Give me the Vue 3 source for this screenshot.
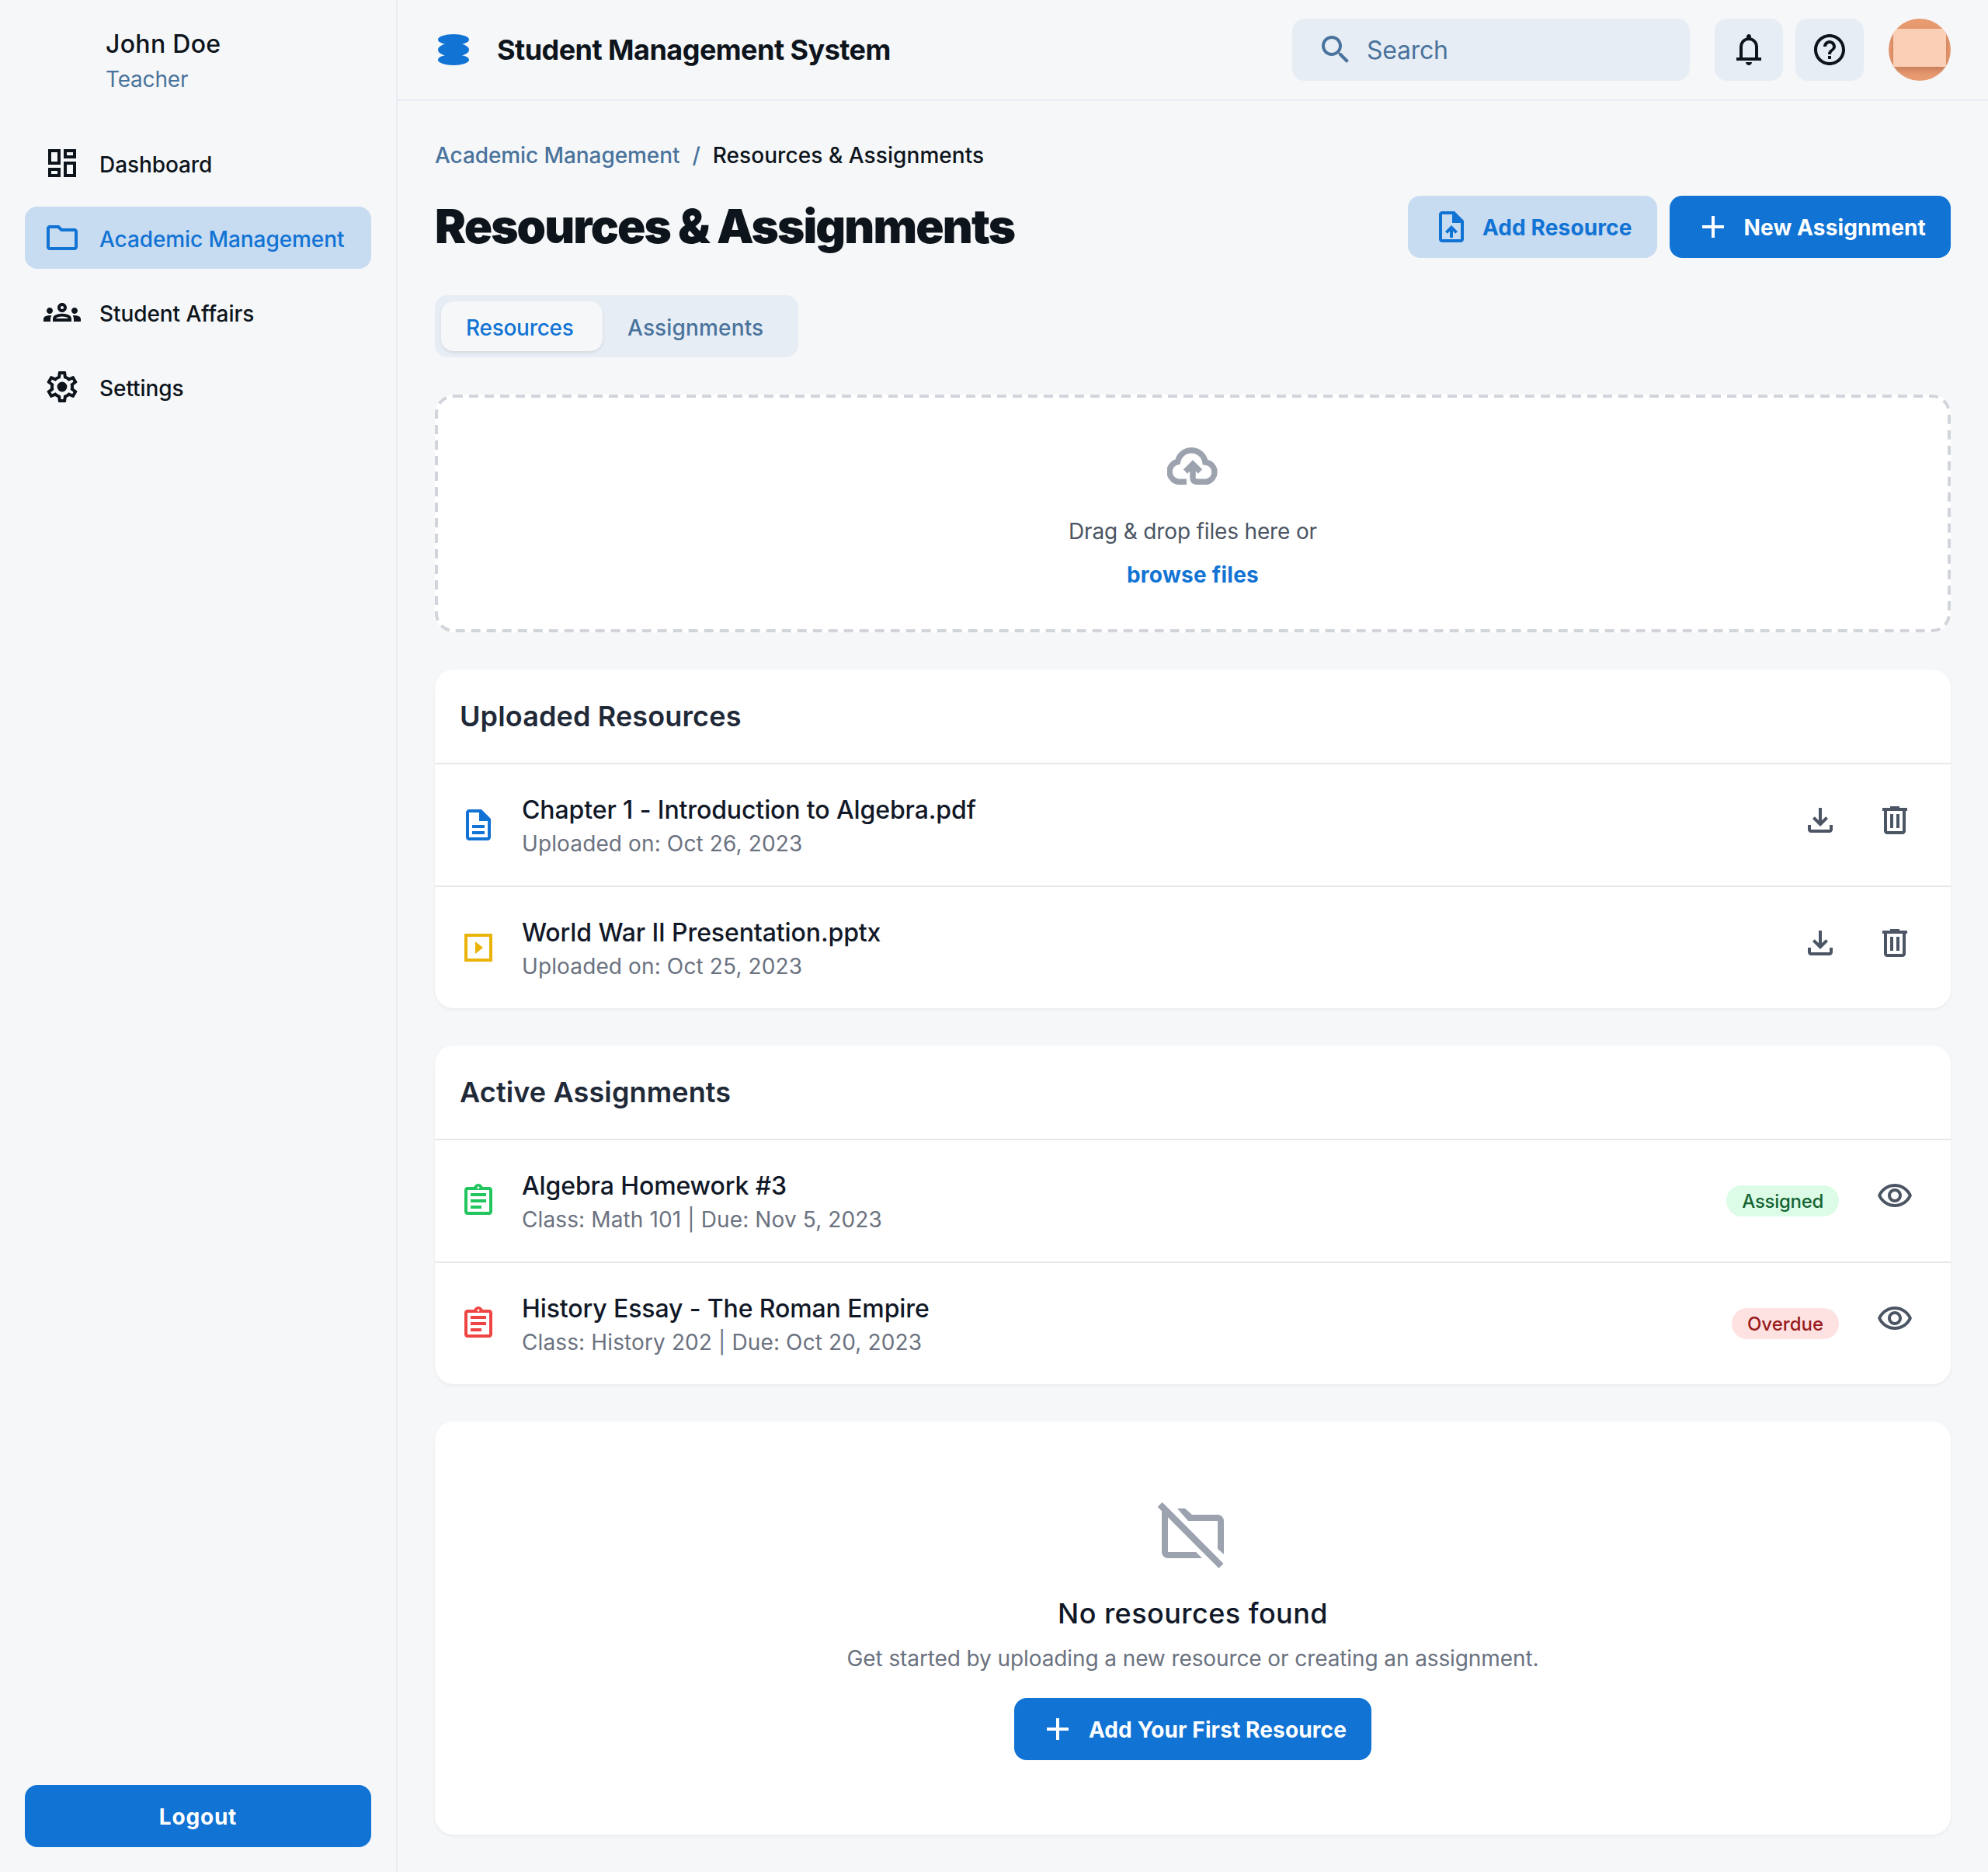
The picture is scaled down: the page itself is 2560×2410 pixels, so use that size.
<script setup>
const nav = [
  { label: 'Dashboard', active: false, vb: '0 0 24 24', d: 'M19 5v2h-4V5h4M9 5v6H5V5h4m10 8v6h-4v-6h4M9 17v2H5v-2h4M21 3h-8v6h8V3zM11 3H3v10h8V3zm10 8h-8v10h8V11zm-10 4H3v6h8v-6z' },
  { label: 'Academic Management', active: true, vb: '0 0 24 24', d: 'M9.17 6l2 2H20v10H4V6h5.17M10 4H4c-1.1 0-1.99.9-1.99 2L2 18c0 1.1.9 2 2 2h16c1.1 0 2-.9 2-2V8c0-1.1-.9-2-2-2h-8l-2-2z' },
  { label: 'Student Affairs', active: false, vb: '0 0 24 24', d: 'M4 13c1.1 0 2-.9 2-2s-.9-2-2-2-2 .9-2 2 .9 2 2 2zm1.13 1.1c-.37-.06-.74-.1-1.13-.1-.99 0-1.93.21-2.78.58C.48 14.9 0 15.62 0 16.43V18h4.5v-1.61c0-.83.23-1.61.63-2.29zM20 13c1.1 0 2-.9 2-2s-.9-2-2-2-2 .9-2 2 .9 2 2 2zm4 3.43c0-.81-.48-1.53-1.22-1.85-.85-.37-1.79-.58-2.78-.58-.39 0-.76.04-1.13.1.4.68.63 1.46.63 2.29V18H24v-1.57zm-7.76-2.65c-1.17-.52-2.61-.9-4.24-.9-1.63 0-3.07.39-4.24.9C6.68 14.13 6 15.21 6 16.39V18h12v-1.61c0-1.18-.68-2.26-1.76-2.61zM8.07 16c.09-.23.13-.39.91-.69.97-.38 1.99-.56 3.02-.56s2.05.18 3.02.56c.77.3.81.46.91.69H8.07zM12 8c.55 0 1 .45 1 1s-.45 1-1 1-1-.45-1-1 .45-1 1-1m0-2c-1.66 0-3 1.34-3 3s1.34 3 3 3 3-1.34 3-3-1.34-3-3-3z' },
  { label: 'Settings', active: false, vb: '0 0 24 24', d: 'M19.43 12.98c.04-.32.07-.64.07-.98 0-.34-.03-.66-.07-.98l2.11-1.65c.19-.15.24-.42.12-.64l-2-3.46c-.09-.16-.26-.25-.44-.25-.06 0-.12.01-.17.03l-2.49 1c-.52-.4-1.08-.73-1.69-.98l-.38-2.65C14.46 2.18 14.25 2 14 2h-4c-.25 0-.46.18-.49.42l-.38 2.65c-.61.25-1.17.59-1.69.98l-2.49-1c-.06-.02-.12-.03-.18-.03-.17 0-.34.09-.43.25l-2 3.46c-.13.22-.07.49.12.64l2.11 1.65c-.04.32-.07.65-.07.98 0 .33.03.66.07.98l-2.11 1.65c-.19.15-.24.42-.12.64l2 3.46c.09.16.26.25.44.25.06 0 .12-.01.17-.03l2.49-1c.52.4 1.08.73 1.69.98l.38 2.65c.03.24.24.42.49.42h4c.25 0 .46-.18.49-.42l.38-2.65c.61-.25 1.17-.59 1.69-.98l2.49 1c.06.02.12.03.18.03.17 0 .34-.09.43-.25l2-3.46c.12-.22.07-.49-.12-.64l-2.11-1.65zm-1.98-1.71c.04.31.05.52.05.73 0 .21-.02.43-.05.73l-.14 1.13.89.7 1.08.84-.7 1.21-1.27-.51-1.04-.42-.9.68c-.43.32-.84.56-1.25.73l-1.06.43-.16 1.13-.2 1.35h-1.4l-.19-1.35-.16-1.13-1.06-.43c-.43-.18-.83-.41-1.23-.71l-.91-.7-1.06.43-1.27.51-.7-1.21 1.08-.84.89-.7-.14-1.13c-.03-.31-.05-.54-.05-.74s.02-.43.05-.73l.14-1.13-.89-.7-1.08-.84.7-1.21 1.27.51 1.04.42.9-.68c.43-.32.84-.56 1.25-.73l1.06-.43.16-1.13.2-1.35h1.39l.19 1.35.16 1.13 1.06.43c.43.18.83.41 1.23.71l.91.7 1.06-.43 1.27-.51.7 1.21-1.07.85-.89.7.14 1.13zM12 8.8a3.2 3.2 0 1 0 0 6.4 3.2 3.2 0 0 0 0-6.4z' }
]

const plus = 'M19 13h-6v6h-2v-6H5v-2h6V5h2v6h6v2z'
const download = 'M18 15v3H6v-3H4v3c0 1.1.9 2 2 2h12c1.1 0 2-.9 2-2v-3h-2zm-1-4l-1.41-1.41L13 12.17V4h-2v8.17L8.41 9.59 7 11l5 5 5-5z'
const trash = 'M15 4V3H9v1H4v2h1v13c0 1.1.9 2 2 2h10c1.1 0 2-.9 2-2V6h1V4h-5zm2 15H7V6h10v13zM9 8h2v9H9zm4 0h2v9h-2z'
const eye = 'M12 6c3.79 0 7.17 2.13 8.82 5.5C19.17 14.87 15.79 17 12 17s-7.17-2.13-8.82-5.5C4.83 8.13 8.21 6 12 6m0-2C7 4 2.73 7.11 1 11.5 2.73 15.89 7 19 12 19s9.27-3.11 11-7.5C21.27 7.11 17 4 12 4zm0 5c1.38 0 2.5 1.12 2.5 2.5S13.38 14 12 14s-2.5-1.12-2.5-2.5S10.62 9 12 9m0-2c-2.48 0-4.5 2.02-4.5 4.5S9.52 16 12 16s4.5-2.02 4.5-4.5S14.48 7 12 7z'
const assignment = 'M19 3h-4.18C14.4 1.84 13.3 1 12 1c-1.3 0-2.4.84-2.82 2H5c-1.1 0-2 .9-2 2v14c0 1.1.9 2 2 2h14c1.1 0 2-.9 2-2V5c0-1.1-.9-2-2-2zm-7-.25c.41 0 .75.34.75.75s-.34.75-.75.75-.75-.34-.75-.75.34-.75.75-.75zM19 19H5V5h14v14zM7 15h7v2H7zM7 11h10v2H7zM7 7h10v2H7z'

const resources = [
  { name: 'Chapter 1 - Introduction to Algebra.pdf', meta: 'Uploaded on: Oct 26, 2023', color: '#1173d4', d: 'M14 2H6c-1.1 0-2 .9-2 2v16c0 1.1.9 2 2 2h12c1.1 0 2-.9 2-2V8l-6-6zM18 20H6V4h6.5v5.5H18V20zM8 12h8v2H8zM8 16h8v2H8z' },
  { name: 'World War II Presentation.pptx', meta: 'Uploaded on: Oct 25, 2023', color: '#eab308', d: 'M3.5 3h17c.3 0 .5.2.5.5v17c0 .3-.2.5-.5.5h-17c-.3 0-.5-.2-.5-.5v-17c0-.3.2-.5.5-.5zM5 5v14h14V5H5zM10 8l5 4-5 4V8z' }
]
const assignments = [
  { name: 'Algebra Homework #3', meta: 'Class: Math 101 | Due: Nov 5, 2023', color: '#22c55e', status: 'Assigned', kind: 'ok' },
  { name: 'History Essay - The Roman Empire', meta: 'Class: History 202 | Due: Oct 20, 2023', color: '#ef4444', status: 'Overdue', kind: 'late' }
]
</script>

<template>
  <div class="page">
    <aside class="sidebar">
      <div class="user">
        <div class="user-slot"></div>
        <div>
          <div class="user-name">John Doe</div>
          <div class="user-role">Teacher</div>
        </div>
      </div>
      <nav class="nav">
        <a v-for="item in nav" :key="item.label" class="nav-item" :class="{ active: item.active }">
          <svg class="icon" :viewBox="item.vb" fill="currentColor"><path :d="item.d" /></svg>
          <span>{{ item.label }}</span>
        </a>
      </nav>
      <button class="btn btn-primary logout"><span>Logout</span></button>
    </aside>

    <div class="content">
      <header class="topbar">
        <div class="brand">
          <svg class="icon" viewBox="0 0 48 48" fill="#1173d4">
            <ellipse cx="24" cy="11" rx="20" ry="7" />
            <ellipse cx="24" cy="24" rx="20" ry="9" />
            <ellipse cx="24" cy="37" rx="20" ry="7" />
          </svg>
          <span class="brand-name">Student Management System</span>
        </div>
        <div class="top-actions">
          <div class="search">
            <svg class="icon" viewBox="0 0 24 24" fill="#49739c"><path d="M15.5 14h-.79l-.28-.27C15.41 12.59 16 11.11 16 9.5 16 5.91 13.09 3 9.5 3S3 5.91 3 9.5 5.91 16 9.5 16c1.61 0 3.09-.59 4.23-1.57l.27.28v.79l5 4.99L20.49 19l-4.99-5zm-6 0C7.01 14 5 11.99 5 9.5S7.01 5 9.5 5 14 7.01 14 9.5 11.99 14 9.5 14z" /></svg>
            <span>Search</span>
          </div>
          <button class="icon-btn">
            <svg class="icon" viewBox="0 -960 960 960" fill="#0d141c"><path d="M160-200v-80h80v-280q0-83 50-147.5T420-792v-28q0-25 17.5-42.5T480-880q25 0 42.5 17.5T540-820v28q80 20 130 84.5T720-560v280h80v80H160Zm320-300Zm0 420q-33 0-56.5-23.5T400-160h160q0 33-23.5 56.5T480-80ZM320-280h320v-280q0-66-47-113t-113-47q-66 0-113 47t-47 113v280Z" /></svg>
          </button>
          <button class="icon-btn help">
            <svg class="icon" viewBox="0 0 24 24" fill="#0d141c"><path d="M11 18h2v-2h-2v2zm1-16C6.48 2 2 6.48 2 12s4.48 10 10 10 10-4.48 10-10S17.52 2 12 2zm0 18c-4.41 0-8-3.59-8-8s3.59-8 8-8 8 3.59 8 8-3.59 8-8 8zm0-14c-2.21 0-4 1.79-4 4h2c0-1.1.9-2 2-2s2 .9 2 2c0 2-3 1.75-3 5h2c0-2.25 3-2.5 3-5 0-2.21-1.79-4-4-4z" /></svg>
          </button>
          <div class="avatar"></div>
        </div>
      </header>

      <main class="main">
        <div class="crumbs">
          <span class="crumb-link">Academic Management</span>
          <span class="crumb-link">/</span>
          <span class="crumb-current">Resources &amp; Assignments</span>
        </div>

        <div class="title-row">
          <h1>Resources &amp; Assignments</h1>
          <div class="title-actions">
            <button class="btn btn-soft">
              <svg class="icon" viewBox="0 0 24 24" fill="currentColor" fill-rule="evenodd"><path d="M14 2H6c-1.1 0-2 .9-2 2v16c0 1.1.9 2 2 2h12c1.1 0 2-.9 2-2V8l-6-6zM18 20H6V4h6.5v5.5H18V20z" /><path d="M8 15.01l1.41 1.41L11 14.84V19h2v-4.16l1.59 1.59L16 15.01 12.01 11z" /></svg>
              <span>Add Resource</span>
            </button>
            <button class="btn btn-primary">
              <svg class="icon" viewBox="0 0 24 24" fill="currentColor"><path :d="plus" /></svg>
              <span>New Assignment</span>
            </button>
          </div>
        </div>

        <div class="tabs">
          <div class="tab tab-active">Resources</div>
          <div class="tab">Assignments</div>
        </div>

        <section class="drop">
          <svg class="drop-border" viewBox="0 0 1952 306" fill="none">
            <rect x="2" y="2" width="1948" height="302" rx="22" stroke="#d1d5db" stroke-width="4" stroke-dasharray="12 8" />
          </svg>
          <svg class="cloud" viewBox="0 0 66 48" fill="none" stroke="#9ca3af" stroke-width="7.5">
            <path d="M25 44.25H16.5A13 13 0 0 1 13.5 18.5A18 18 0 0 1 49 19A12.8 12.8 0 0 1 51 44.25H39Q33 44.25 33 39V20" />
            <path d="M23.5 31L33 21.5L42.5 31" />
          </svg>
          <p class="drop-text">Drag &amp; drop files here or</p>
          <p class="drop-link">browse files</p>
        </section>

        <section class="card">
          <h2 class="card-title">Uploaded Resources</h2>
          <div v-for="r in resources" :key="r.name" class="row">
            <svg class="icon" viewBox="0 0 24 24" :fill="r.color" fill-rule="evenodd"><path :d="r.d" /></svg>
            <div class="row-body">
              <div class="row-name">{{ r.name }}</div>
              <div class="row-meta">{{ r.meta }}</div>
            </div>
            <div class="row-actions">
              <button class="ghost"><svg class="icon" viewBox="0 0 24 24" fill="#4b5563"><path :d="download" /></svg></button>
              <button class="ghost"><svg class="icon" viewBox="0 0 24 24" fill="#4b5563"><path :d="trash" /></svg></button>
            </div>
          </div>
        </section>

        <section class="card">
          <h2 class="card-title">Active Assignments</h2>
          <div v-for="a in assignments" :key="a.name" class="row">
            <svg class="icon" viewBox="0 0 24 24" :fill="a.color"><path :d="assignment" /></svg>
            <div class="row-body">
              <div class="row-name">{{ a.name }}</div>
              <div class="row-meta">{{ a.meta }}</div>
            </div>
            <div class="row-actions row-actions-status">
              <span class="pill" :class="a.kind">{{ a.status }}</span>
              <button class="ghost"><svg class="icon" viewBox="0 0 24 24" fill="#4b5563"><path :d="eye" /></svg></button>
            </div>
          </div>
        </section>

        <section class="card empty">
          <svg class="empty-icon" viewBox="0 0 96 96" fill="#9ca3af">
            <path d="M8 11V64a8 8 0 0 0 8 8H60l-8-8H16V19z" />
            <path d="M28 8H38L47 16H80a8 8 0 0 1 8 8V67l-8-7V24H42z" />
            <path d="M2.7 6L8.7 0L87.5 79L81.5 85z" />
          </svg>
          <h3>No resources found</h3>
          <p>Get started by uploading a new resource or creating an assignment.</p>
          <button class="btn btn-primary">
            <svg class="icon" viewBox="0 0 24 24" fill="currentColor"><path :d="plus" /></svg>
            <span>Add Your First Resource</span>
          </button>
        </section>
      </main>
    </div>
  </div>
</template>

<style>
html, body { margin: 0; background: #f6f7f8; }
</style>

<style scoped>
.page {
  display: flex;
  width: 2560px;
  height: 2410px;
  background: #f6f7f8;
  color: #0d141c;
  font-family: Inter, "Liberation Sans", sans-serif;
  overflow: hidden;
}
.icon { width: 48px; height: 48px; flex: none; display: block; }
button { font-family: inherit; border: 0; cursor: pointer; padding: 0; }
h1, h2, h3, p { margin: 0; }

.sidebar {
  box-sizing: border-box;
  width: 512px;
  flex: none;
  padding: 32px;
  border-right: 2px solid #e7edf4;
  display: flex;
  flex-direction: column;
}
.user { display: flex; gap: 24px; height: 90px; margin-top: 1px; margin-bottom: 47px; }
.user-slot { width: 80px; height: 80px; flex: none; }
.user-name { font-size: 32px; line-height: 48px; font-weight: 500; letter-spacing: 0.3px; }
.user-role { font-size: 28px; line-height: 42px; color: #49739c; letter-spacing: -0.2px; }

.nav { display: flex; flex-direction: column; gap: 16px; flex: 1; }
.nav-item {
  height: 80px;
  box-sizing: border-box;
  padding: 0 24px;
  display: flex;
  align-items: center;
  gap: 24px;
  border-radius: 16px;
  font-size: 28px;
  font-weight: 500;
  line-height: 42px;
  letter-spacing: -0.08px;
}
.nav-item span { padding-top: 3px; }
.nav-item.active { background: #c7dbf1; color: #1173d4; }

.logout { width: 100%; height: 80px; justify-content: center; flex: none; margin-top: auto; }
.logout span { padding-top: 3px; letter-spacing: 0.8px; }

.content { flex: 1; min-width: 0; display: flex; flex-direction: column; }
.topbar {
  height: 128px;
  flex: none;
  padding: 0 48px;
  border-bottom: 2px solid #e7edf4;
  display: flex;
  align-items: center;
  justify-content: space-between;
}
.brand { display: flex; align-items: center; gap: 32px; }
.brand-name { font-size: 36px; font-weight: 700; letter-spacing: -0.54px; }
.top-actions { display: flex; align-items: center; gap: 16px; }
.search {
  box-sizing: border-box;
  width: 512px;
  height: 80px;
  padding-left: 32px;
  margin-right: 16px;
  display: flex;
  align-items: center;
  gap: 16px;
  background: #e7edf4;
  border-radius: 16px;
  color: #49739c;
  font-size: 32px;
  letter-spacing: -0.25px;
}
.icon-btn {
  width: 88px;
  height: 80px;
  background: #e7edf4;
  border-radius: 16px;
  display: flex;
  align-items: center;
  justify-content: center;
}
.help { margin-right: 16px; }
.avatar {
  width: 80px;
  height: 80px;
  border-radius: 50%;
  background: #e89a70;
  position: relative;
  overflow: hidden;
}
.avatar::after {
  content: "";
  position: absolute;
  left: 6px;
  right: 6px;
  top: 13px;
  height: 49px;
  background: #facfb5;
  box-shadow: 0 4px 8px rgba(130, 70, 40, 0.35);
}

.main { flex: 1; padding: 48px; display: flex; flex-direction: column; }
.crumbs { display: flex; gap: 16px; font-size: 28px; font-weight: 500; line-height: 44px; margin-bottom: 30px; }
.crumb-link { color: #49739c; letter-spacing: -0.08px; }
.crumb-current { letter-spacing: 0.07px; }

.title-row { display: flex; align-items: center; justify-content: space-between; height: 80px; margin-bottom: 48px; }
h1 { font-size: 60px; font-weight: 900; letter-spacing: -1.85px; line-height: 76px; margin-bottom: 3px; color: #0d141c; }
.title-actions { display: flex; gap: 16px; }
.btn {
  height: 80px;
  box-sizing: border-box;
  padding: 0 32px;
  display: flex;
  align-items: center;
  gap: 16px;
  border-radius: 16px;
  font-size: 28px;
  font-weight: 700;
  letter-spacing: 0.13px;
}
.btn span { padding-top: 1px; }
.btn-primary { background: #1173d4; color: #fff; }
.btn-soft { background: #c7dbf1; color: #1173d4; }

.tabs {
  align-self: flex-start;
  width: 468px;
  box-sizing: border-box;
  height: 80px;
  padding: 8px;
  display: flex;
  background: #e7edf4;
  border-radius: 16px;
  margin-bottom: 48px;
}
.tab {
  box-sizing: border-box;
  height: 64px;
  padding: 4px 0 0 32px;
  display: flex;
  align-items: center;
  border-radius: 16px;
  font-size: 28px;
  font-weight: 500;
  color: #49739c;
  letter-spacing: 0.15px;
}
.tab-active { width: 208px; background: #f6f7f8; color: #1173d4; letter-spacing: -0.27px; box-shadow: 0 2px 4px rgba(0, 0, 0, 0.08); }

.drop {
  box-sizing: border-box;
  height: 306px;
  padding-top: 68px;
  margin-bottom: 48px;
  border-radius: 24px;
  background: #fff;
  position: relative;
  display: flex;
  flex-direction: column;
  align-items: center;
}
.drop-border { position: absolute; inset: 0; width: 100%; height: 100%; }
.cloud { width: 66px; height: 48px; display: block; }
.drop-text { margin-top: 39px; font-size: 28px; line-height: 42px; color: #4b5563; letter-spacing: -0.16px; }
.drop-link { margin-top: 14px; font-size: 28px; line-height: 42px; font-weight: 700; color: #1173d4; letter-spacing: 0.27px; }

.card {
  background: #fff;
  border-radius: 24px;
  box-shadow: 0 2px 4px rgba(0, 0, 0, 0.05);
  margin-bottom: 48px;
}
.card-title {
  box-sizing: border-box;
  height: 120px;
  padding: 0 32px;
  display: flex;
  align-items: center;
  font-size: 36px;
  font-weight: 600;
  color: #1f2937;
  letter-spacing: 0.13px;
}
.row {
  box-sizing: border-box;
  height: 158px;
  padding: 0 32px;
  border-top: 2px solid #e5e7eb;
  display: flex;
  align-items: center;
  gap: 32px;
}
.row-body { flex: 1; min-width: 0; }
.row-name { font-size: 32px; line-height: 48px; font-weight: 500; color: #111827; margin-top: 3px; margin-bottom: -3px; letter-spacing: -0.11px; }
.row-meta { font-size: 28px; line-height: 44px; color: #6b7280; letter-spacing: 0.12px; }
.row-actions { display: flex; gap: 16px; align-self: flex-start; margin-top: 32px; }
.row-actions-status { gap: 32px; }
.ghost {
  width: 80px;
  height: 80px;
  padding: 16px;
  background: transparent;
  border-radius: 50%;
}
.pill {
  align-self: center;
  margin-top: 12px;
  height: 40px;
  padding: 0 20px;
  display: flex;
  align-items: center;
  border-radius: 20px;
  font-size: 24px;
  font-weight: 500;
}
.pill.ok { background: #dcfce7; color: #166534; letter-spacing: -0.3px; }
.pill.late { background: #fee2e2; color: #991b1b; }

.empty {
  box-sizing: border-box;
  height: 532px;
  margin-bottom: 0;
  padding-top: 104px;
  display: flex;
  flex-direction: column;
  align-items: center;
}
.empty-icon { width: 96px; height: 96px; display: block; }
.empty h3 { margin-top: 20px; font-size: 36px; line-height: 54px; font-weight: 500; color: #111827; letter-spacing: 0.45px; }
.empty p { margin-top: 10px; font-size: 28px; line-height: 42px; color: #6b7280; letter-spacing: -0.1px; }
.empty .btn { margin-top: 30px; }
</style>
